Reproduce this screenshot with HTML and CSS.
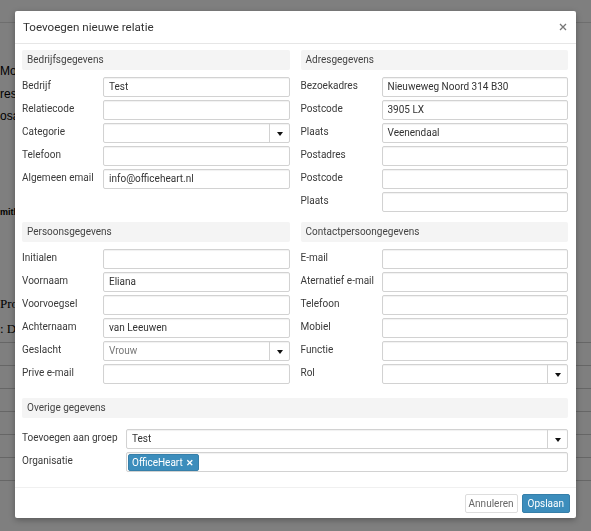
FILE: index.html
```html
<!DOCTYPE html>
<html lang="nl">
<head>
    <meta charset="UTF-8">
    <meta name="viewport" content="width=device-width, initial-scale=1.0">
    <title>Toevoegen nieuwe relatie</title>
    <link rel="stylesheet" href="styles.css">
</head>
<body>
    <div class="page">
        <div class="topbar"></div>
        <div class="info clip">
            <div>Mobiel</div>
            <div>rescode</div>
            <div>osaal</div>
        </div>
        <div class="owner clip">mith</div>
        <div class="notes clip">
            <div>Product</div>
            <div>: Details</div>
        </div>
        <table class="list">
            <tr><td>&nbsp;</td></tr>
            <tr><td>&nbsp;</td></tr>
            <tr><td>&nbsp;</td></tr>
            <tr><td>&nbsp;</td></tr>
            <tr><td>&nbsp;</td></tr>
            <tr><td>&nbsp;</td></tr>
            <tr><td>&nbsp;</td></tr>
        </table>
    </div>

    <div class="backdrop"></div>

    <div class="modal">
        <div class="modal-header">
            <h4 class="modal-title">Toevoegen nieuwe relatie</h4>
            <button class="close" type="button">
                <svg width="8" height="8" viewBox="0 0 8 8"><path d="M1 1L7 7M7 1L1 7" stroke="#777" stroke-width="1.3"/></svg>
            </button>
        </div>
        <div class="modal-body">
            <div class="row">
                <div class="col">
                    <div class="section-title">Bedrijfsgegevens</div>
                    <div class="field"><label>Bedrijf</label><div class="input">Test</div></div>
                    <div class="field"><label>Relatiecode</label><div class="input"></div></div>
                    <div class="field"><label>Categorie</label><div class="input select"><span></span><i class="caret"></i></div></div>
                    <div class="field"><label>Telefoon</label><div class="input"></div></div>
                    <div class="field"><label>Algemeen email</label><div class="input">info@officeheart.nl</div></div>
                </div>
                <div class="col">
                    <div class="section-title">Adresgegevens</div>
                    <div class="field"><label>Bezoekadres</label><div class="input">Nieuweweg Noord 314 B30</div></div>
                    <div class="field"><label>Postcode</label><div class="input">3905 LX</div></div>
                    <div class="field"><label>Plaats</label><div class="input">Veenendaal</div></div>
                    <div class="field"><label>Postadres</label><div class="input"></div></div>
                    <div class="field"><label>Postcode</label><div class="input"></div></div>
                    <div class="field"><label>Plaats</label><div class="input"></div></div>
                </div>
            </div>
            <div class="row">
                <div class="col">
                    <div class="section-title">Persoonsgegevens</div>
                    <div class="field"><label>Initialen</label><div class="input"></div></div>
                    <div class="field"><label>Voornaam</label><div class="input">Eliana</div></div>
                    <div class="field"><label>Voorvoegsel</label><div class="input"></div></div>
                    <div class="field"><label>Achternaam</label><div class="input">van Leeuwen</div></div>
                    <div class="field"><label>Geslacht</label><div class="input select"><span class="muted">Vrouw</span><i class="caret"></i></div></div>
                    <div class="field"><label>Prive e-mail</label><div class="input"></div></div>
                </div>
                <div class="col">
                    <div class="section-title">Contactpersoongegevens</div>
                    <div class="field"><label>E-mail</label><div class="input"></div></div>
                    <div class="field"><label>Aternatief e-mail</label><div class="input"></div></div>
                    <div class="field"><label>Telefoon</label><div class="input"></div></div>
                    <div class="field"><label>Mobiel</label><div class="input"></div></div>
                    <div class="field"><label>Functie</label><div class="input"></div></div>
                    <div class="field"><label>Rol</label><div class="input select"><span></span><i class="caret"></i></div></div>
                </div>
            </div>
            <div class="other">
                <div class="section-title">Overige gegevens</div>
                <div class="field wide"><label>Toevoegen aan groep</label><div class="input select"><span>Test</span><i class="caret"></i></div></div>
                <div class="field wide"><label>Organisatie</label><div class="input tags"><span class="tag">OfficeHeart <b>&#10005;</b></span></div></div>
            </div>
        </div>
        <div class="modal-footer">
            <button class="btn" type="button">Annuleren</button>
            <button class="btn btn-primary" type="button">Opslaan</button>
        </div>
    </div>
</body>
</html>
```

FILE: styles.css
```css
body {
    margin: 0;
    background: #fff;
    font-family: Roboto, "Liberation Sans", sans-serif;
    color: #333;
}
.page {
    font-family: "Liberation Sans", sans-serif;
    color: #000;
}
.clip {
    width: 15px;
    overflow: hidden;
    white-space: nowrap;
}
.topbar {
    height: 22px;
    border-bottom: 1px solid #ddd;
}
.info {
    margin-top: 37px;
    font-size: 12px;
    line-height: 22.5px;
}
.owner {
    margin-top: 79px;
    font-size: 9px;
    font-weight: bold;
}
.notes {
    margin-top: 74px;
    font-family: "Liberation Serif", serif;
    font-size: 13px;
    line-height: 25px;
}
.list {
    width: 100%;
    border-collapse: collapse;
    margin-top: 1px;
}
.list td {
    border-top: 1px solid #ccc;
    height: 22px;
    padding: 0;
}
.backdrop {
    position: fixed;
    inset: 0;
    background: rgba(0, 0, 0, 0.5);
}
.modal {
    position: absolute;
    left: 15px;
    top: 11px;
    width: 561px;
    background: #fff;
    border-radius: 2px;
    box-shadow: 0 2px 6px rgba(0, 0, 0, 0.3);
}
.modal-header {
    height: 32px;
    border-bottom: 1px solid #e6e6e6;
    display: flex;
    align-items: center;
    justify-content: space-between;
    padding: 0 9px 0 8px;
}
.modal-title {
    margin: 0;
    font-size: 11.6px;
    font-weight: normal;
    color: #333;
}
.close {
    border: 0;
    background: none;
    padding: 0;
    display: flex;
}
.modal-body {
    padding: 6px 8px 12px 7px;
}
.row {
    display: grid;
    grid-template-columns: 1fr 1fr;
    gap: 11px;
    margin-bottom: 7px;
}
.section-title {
    height: 20px;
    line-height: 20px;
    background: #f4f4f4;
    border-radius: 2px;
    padding: 0 5px;
    font-size: 10px;
    color: #444;
    margin-bottom: 7px;
}
.field {
    display: grid;
    grid-template-columns: 81px 1fr;
    align-items: center;
    margin-bottom: 3px;
}
.field label {
    font-size: 10px;
    color: #3a3a3a;
    white-space: nowrap;
    margin-top: -3px;
}
.input {
    height: 20px;
    box-sizing: border-box;
    border: 1px solid #d2d2d2;
    border-radius: 2px;
    box-shadow: inset 0 1px 1px rgba(0, 0, 0, 0.06);
    padding: 0 5px;
    font-size: 10px;
    line-height: 18px;
    color: #333;
}
.select {
    display: flex;
    padding-right: 0;
}
.select span {
    flex: 1;
}
.muted {
    color: #777;
}
.caret {
    width: 19px;
    border-left: 1px solid #d2d2d2;
    position: relative;
}
.caret::after {
    content: "";
    position: absolute;
    left: 7px;
    top: 8px;
    border-left: 3px solid transparent;
    border-right: 3px solid transparent;
    border-top: 4px solid #111;
}
.other {
    margin-top: 11px;
}
.other .section-title {
    margin-bottom: 11px;
}
.field.wide {
    grid-template-columns: 104px 1fr;
}
.tags {
    padding: 0 0 0 1px;
    display: flex;
    align-items: center;
}
.tag {
    display: inline-block;
    height: 17px;
    box-sizing: border-box;
    background: #3c8dbc;
    border: 1px solid #367fa9;
    border-radius: 2px;
    color: #fff;
    font-size: 10px;
    padding: 0 4px 0 3px;
    line-height: 15px;
}
.tag b {
    font-size: 9px;
    margin-left: 1px;
}
.modal-footer {
    border-top: 1px solid #f0f0f0;
    padding: 6px 6px 5px;
    display: flex;
    justify-content: flex-end;
    gap: 4px;
}
.btn {
    height: 19px;
    padding: 0 3px;
    font-family: Roboto, "Liberation Sans", sans-serif;
    font-size: 10px;
    color: #666;
    background: #fff;
    border: 1px solid #ddd;
    border-radius: 2px;
}
.btn-primary {
    background: #3c8dbc;
    border-color: #367fa9;
    color: #fff;
    padding: 0 5px;
}
```
